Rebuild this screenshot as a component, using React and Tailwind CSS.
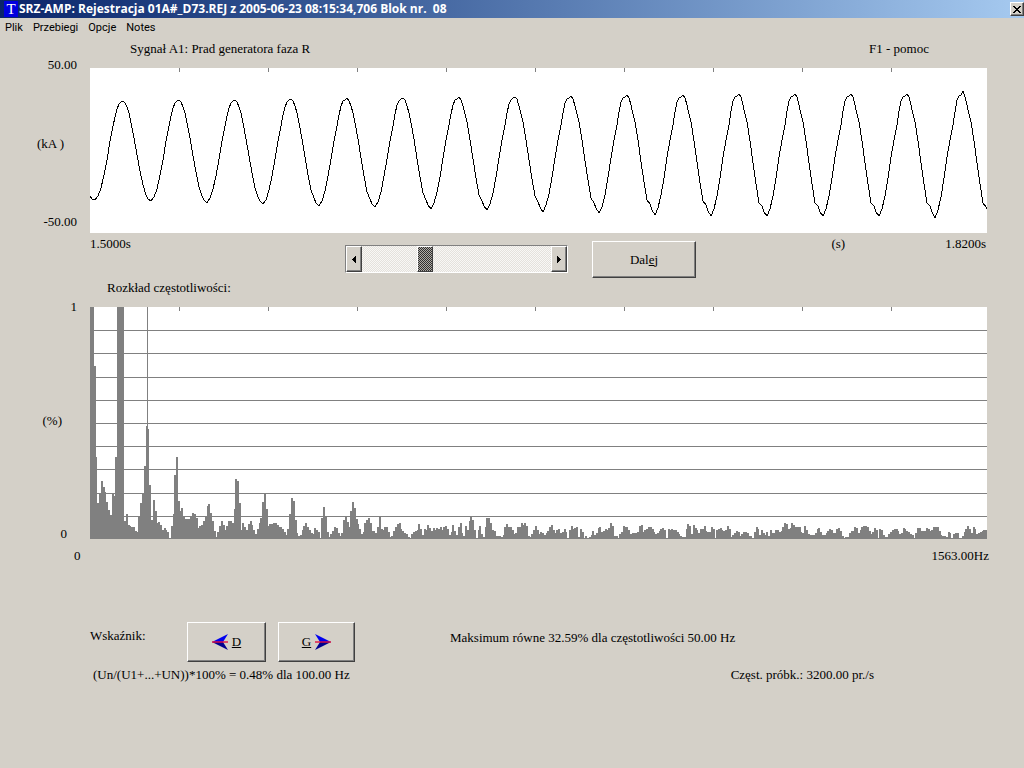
import { useState } from 'react'

const MENU = ['Plik', 'Przebiegi', 'Opcje', 'Notes']

// Kształt jednego okresu: przesunięcie od szczytu i poziom na początku / końcu rejestracji
const PROFILE_DX = [-28, -25, -22, -19, -16, -13, -10, -8, -6, -4, -2, 0, 2, 4, 6, 8, 11, 14, 17, 20, 23, 25]
const PROFILE_START = [132, 128, 120, 107, 92, 73, 58, 49, 41, 36, 34, 33, 35, 39, 45, 55, 70, 87, 103, 117, 127, 131]
const PROFILE_END = [148, 141, 128, 110, 89, 72, 57, 43, 33, 29, 28, 26, 29, 37, 46, 54, 73, 95, 116, 135, 138, 144]
const PROFILE_LAST = [150, 142, 129, 110, 89, 72, 57, 44, 32, 28, 27, 23, 29, 37, 46, 54, 73, 95, 116, 135, 139, 142]

const CYCLES = 16
const PERIOD = 56.06
const FIRST_PEAK = 32.5

function buildWave() {
  const points = [[0, 128], [2, 131]]
  for (let i = 0; i < CYCLES; i++) {
    const mix = Math.min(1, i / 11)
    const end = i === CYCLES - 1 ? PROFILE_LAST : PROFILE_END
    PROFILE_DX.forEach((dx, k) => {
      const x = FIRST_PEAK + i * PERIOD + dx
      const y = PROFILE_START[k] * (1 - mix) + end[k] * mix
      if (x > 2) points.push([Math.round(x), Math.round(y)])
    })
  }
  return points.map((p) => p.join(',')).join(' ')
}

const WAVE = buildWave()

// Wysokości prążków widma, co 3.125 Hz
const SPECTRUM = [
  232, 232, 173, 82, 36, 45, 58, 52, 47, 37, 29, 24, 45, 43, 82, 232, 232, 232, 232, 18,
  25, 14, 13, 12, 12, 8, 7, 22, 36, 45, 73, 113, 110, 54, 19, 39, 28, 16, 17, 14,
  9, 11, 9, 7, 1, 13, 25, 64, 82, 38, 28, 31, 22, 20, 20, 20, 22, 26, 25, 21,
  11, 13, 14, 18, 22, 33, 35, 26, 18, 8, 2, 7, 13, 18, 14, 9, 13, 18, 18, 16,
  30, 60, 58, 36, 9, 16, 12, 9, 15, 18, 14, 9, 5, 10, 16, 21, 37, 45, 30, 13,
  15, 15, 16, 16, 14, 12, 12, 10, 7, 4, 10, 25, 41, 38, 19, 6, 3, 4, 9, 13,
  16, 12, 9, 6, 5, 11, 9, 7, 0, 21, 32, 22, 7, 2, 5, 8, 12, 11, 6, 3,
  6, 19, 22, 17, 12, 28, 37, 31, 20, 15, 10, 5, 7, 16, 19, 21, 16, 8, 8, 6,
  12, 22, 10, 9, 12, 12, 7, 2, 3, 8, 12, 15, 16, 10, 8, 6, 5, 2, 1, 5,
  7, 8, 9, 15, 10, 4, 10, 9, 14, 11, 8, 11, 9, 11, 10, 12, 9, 12, 13, 10,
  4, 7, 14, 8, 4, 12, 16, 6, 3, 13, 9, 18, 23, 19, 9, 1, 9, 13, 5, 2,
  12, 21, 21, 16, 9, 8, 3, 3, 3, 2, 4, 12, 15, 12, 12, 9, 5, 6, 12, 12,
  16, 14, 16, 13, 3, 2, 5, 9, 13, 9, 5, 7, 6, 4, 6, 8, 12, 14, 9, 6,
  9, 10, 6, 7, 10, 7, 0, 9, 13, 10, 11, 12, 2, 10, 7, 1, 3, 1, 2, 4,
  8, 4, 6, 11, 12, 7, 8, 10, 9, 11, 16, 13, 3, 3, 1, 5, 7, 13, 12, 12,
  9, 5, 6, 6, 6, 7, 13, 14, 7, 9, 10, 12, 12, 10, 7, 5, 6, 8, 10, 11,
  9, 1, 10, 9, 10, 9, 9, 7, 5, 3, 2, 2, 10, 15, 13, 5, 14, 11, 9, 6,
  10, 10, 13, 8, 7, 7, 12, 10, 1, 9, 10, 11, 9, 8, 9, 13, 10, 2, 4, 6,
  8, 7, 3, 5, 7, 7, 6, 3, 3, 1, 7, 12, 10, 4, 9, 6, 4, 7, 3, 9,
  6, 6, 9, 9, 7, 8, 12, 16, 15, 10, 11, 16, 14, 12, 12, 12, 7, 6, 13, 9,
  5, 4, 4, 4, 6, 10, 11, 7, 4, 4, 6, 8, 10, 9, 6, 6, 10, 11, 8, 3,
  1, 2, 2, 6, 8, 8, 12, 11, 6, 9, 12, 13, 13, 12, 8, 5, 7, 11, 9, 1,
  10, 9, 4, 2, 2, 5, 7, 9, 10, 10, 8, 5, 6, 11, 10, 8, 7, 5, 4, 1,
  6, 11, 11, 8, 8, 8, 11, 10, 8, 9, 12, 12, 12, 8, 4, 3, 3, 2, 7, 6,
  1, 5, 6, 6, 1, 1, 3, 7, 10, 13, 10, 6, 12, 10, 5, 6, 7, 8, 9, 9,
]

const TICKS = [89, 178, 267, 356, 445, 534, 623, 712, 801]
const GRID = [23, 46, 70, 93, 116, 139, 162, 186, 209]

const RAISED =
  'border border-t-white border-l-white border-r-[#404040] border-b-[#404040] bg-[#d4d0c8] shadow-[inset_-1px_-1px_0_#808080]'

function Ticks() {
  return TICKS.map((x) => <rect key={x} x={x} y="0" width="1" height="4" fill="#808080" />)
}

function TitleBar() {
  return (
    <header className="flex h-[18px] items-center bg-linear-to-r from-[#0a246a] to-[#a6caf0] pl-1 text-white">
      <span className="flex h-4 w-[14px] items-center justify-center bg-[#0000e0] font-['Liberation_Serif',serif] text-[15px] leading-4">
        T
      </span>
      <h1 className="flex-1 pl-px font-['Open_Sans',sans-serif] text-[12px] leading-4 font-bold whitespace-pre">
        SRZ-AMP: Rejestracja 01A#_D73.REJ z 2005-06-23 08:15:34,706 Blok nr.  08
      </h1>
      <button type="button" aria-label="Zamknij" className={`flex h-[14px] w-[14px] items-center justify-center ${RAISED}`}>
        <svg width="8" height="7" viewBox="0 0 8 7" shapeRendering="crispEdges">
          <path d="M0 0h2v1h1v1h2v-1h1v-1h2v1h-1v1h-1v1h-1v1h1v1h1v1h1v1h-2v-1h-1v-1h-2v1h-1v1h-2v-1h1v-1h1v-1h1v-1h-1v-1h-1v-1h-1z" />
        </svg>
      </button>
    </header>
  )
}

function SignalChart() {
  return (
    <svg className="block h-[165px] w-full bg-white" viewBox="0 0 897 165" preserveAspectRatio="none" shapeRendering="crispEdges">
      <Ticks />
      <polyline points={WAVE} fill="none" stroke="#000" strokeWidth="1" vectorEffect="non-scaling-stroke" />
    </svg>
  )
}

function SpectrumChart() {
  return (
    <svg className="block h-[232px] w-full bg-white" viewBox="0 0 897 232" preserveAspectRatio="none" shapeRendering="crispEdges">
      <Ticks />
      {GRID.map((y) => (
        <rect key={y} x="0" y={y} width="897" height="1" fill="#808080" />
      ))}
      {SPECTRUM.map((h, i) => (
        <rect key={i} x={Math.round(i * 1.794)} y={232 - h} width="2" height={h} fill="#808080" />
      ))}
      {/* linia wskaźnika */}
      <rect x="57" y="0" width="1" height="232" fill="#808080" />
      <rect x="0" y="231" width="897" height="1" fill="#808080" />
    </svg>
  )
}

function ScrollButton({ label, d }) {
  return (
    <button type="button" aria-label={label} className={`flex w-4 shrink-0 items-center justify-center ${RAISED}`}>
      <svg width="4" height="7" viewBox="0 0 4 7" shapeRendering="crispEdges">
        <path d={d} />
      </svg>
    </button>
  )
}

function ScrollBar() {
  const [position, setPosition] = useState(32)
  return (
    <div className="flex h-[28px] w-[223px] shrink-0 border border-t-[#808080] border-l-[#808080] border-r-white border-b-white">
      <ScrollButton label="W lewo" d="M4 0v7h-1v-1h-1v-1h-1v-1h-1v-1h1v-1h1v-1h1v-1z" />
      <input
        type="range"
        min="0"
        max="100"
        value={position}
        onChange={(e) => setPosition(Number(e.target.value))}
        aria-label="Przesunięcie"
        className="h-full min-w-0 flex-1 appearance-none bg-[repeating-conic-gradient(#e4e1dc_0_25%,#f8f7f5_0_50%)] bg-[length:2px_2px] [&::-webkit-slider-thumb]:h-[26px] [&::-webkit-slider-thumb]:w-4 [&::-webkit-slider-thumb]:appearance-none [&::-webkit-slider-thumb]:border [&::-webkit-slider-thumb]:border-t-white [&::-webkit-slider-thumb]:border-l-white [&::-webkit-slider-thumb]:border-r-[#404040] [&::-webkit-slider-thumb]:border-b-[#404040] [&::-webkit-slider-thumb]:bg-[repeating-conic-gradient(#303030_0_25%,#b0aca6_0_50%)] [&::-webkit-slider-thumb]:bg-[length:2px_2px]"
      />
      <ScrollButton label="W prawo" d="M0 0v7h1v-1h1v-1h1v-1h1v-1h-1v-1h-1v-1h-1v-1z" />
    </div>
  )
}

function ArrowIcon({ flip }) {
  return (
    <svg width="16" height="16" viewBox="0 0 16 16" className={flip ? '-scale-x-100' : ''}>
      <path d="M16 0L0 8h11z" fill="#0000f0" />
      <path d="M16 16L0 8h11z" fill="#000090" />
      <path d="M0 8h16" stroke="#e01040" strokeWidth="1.4" />
    </svg>
  )
}

export default function App() {
  return (
    <div className="min-h-screen bg-[#d4d0c8] font-['Liberation_Serif',serif] text-[13px] leading-4 text-black">
      <TitleBar />

      <nav className="flex h-5 items-center gap-[10px] pl-[5px] font-['Roboto',sans-serif] text-[11px]">
        {MENU.map((item) => (
          <button key={item} type="button">{item}</button>
        ))}
      </nav>

      <main>
        <div className="flex justify-between pt-[3px] pr-[95px] pl-[130px]">
          <h2>Sygnał A1: Prad generatora faza R</h2>
          <span>F1 - pomoc</span>
        </div>

        {/* Przebieg czasowy */}
        <section className="grid grid-cols-[90px_1fr_37px]">
          <div className="flex flex-col items-end justify-between pr-[13px] pb-[3px]">
            <span>50.00</span>
            <span className="pr-[13px]">(kA )</span>
            <span>-50.00</span>
          </div>
          <div className="pt-[11px]">
            <SignalChart />
          </div>
        </section>

        <div className="flex items-start pt-[3px] pr-[38px] pl-[90px]">
          <span className="w-[255px] shrink-0">1.5000s</span>
          <div className="pt-[9px]">
            <ScrollBar />
          </div>
          <div className="pt-[5px] pl-6">
            <button type="button" className={`h-[37px] w-[104px] ${RAISED}`}>
              Dal<u>e</u>j
            </button>
          </div>
          <span className="flex-1 pr-[100px] text-right">(s)</span>
          <span>1.8200s</span>
        </div>

        <h2 className="pt-[2px] pb-[3px] pl-[107px]">Rozkład częstotliwości:</h2>

        {/* Widmo */}
        <section className="grid grid-cols-[90px_1fr_37px]">
          <div className="flex flex-col items-end justify-between pr-[13px]">
            <span>1</span>
            <span className="pr-[15px]">(%)</span>
            <span className="pr-[10px]">0</span>
          </div>
          <div className="pt-[8px] pb-[3px]">
            <SpectrumChart />
          </div>
        </section>
        <div className="flex justify-between pt-[6px] pr-[35px] pl-[74px]">
          <span>0</span>
          <span>1563.00Hz</span>
        </div>

        <div className="flex items-start pt-[58px] pl-[90px]">
          <span className="w-[97px] pt-[6px]">Wskaźnik:</span>
          <div className="flex gap-3">
            <button type="button" className={`flex h-10 w-[79px] items-center justify-center gap-1 ${RAISED}`}>
              <ArrowIcon />
              <u>D</u>
            </button>
            <button type="button" className={`flex h-10 w-[77px] items-center justify-center gap-1 ${RAISED}`}>
              <u>G</u>
              <ArrowIcon flip />
            </button>
          </div>
          <span className="pt-2 pl-[95px]">Maksimum równe 32.59% dla częstotliwości 50.00 Hz</span>
        </div>
        <div className="flex justify-between pt-[5px] pr-[150px] pl-[93px]">
          <span>(Un/(U1+...+UN))*100% = 0.48% dla 100.00 Hz</span>
          <span>Częst. próbk.: 3200.00 pr./s</span>
        </div>
      </main>
    </div>
  )
}
